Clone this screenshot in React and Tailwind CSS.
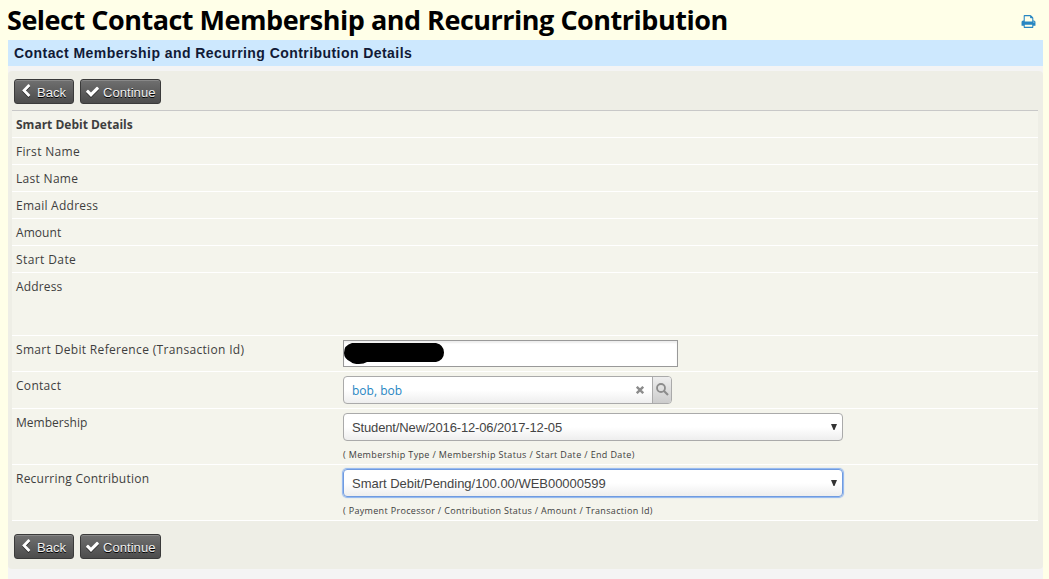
const CHEVRON =
  'M1427 301l-531 531 531 531q19 19 19 45t-19 45l-166 166q-19 19-45 19t-45-19l-742-742q-19-19-19-45t19-45l742-742q19-19 45-19t45 19l166 166q19 19 19 45t-19 45z';
const CHECK =
  'M1671 566q0 40-28 68l-724 724-136 136q-28 28-68 28t-68-28l-136-136-362-362q-28-28-28-68t28-68l136-136q28-28 68-28t68 28l294 295 656-657q28-28 68-28t68 28l136 136q28 28 28 68z';
const PRINT =
  'M448 1536h896v-256h-896v256zm0-640h896v-384h-160q-40 0-68-28t-28-68v-160h-640v640zm1152 64q0-26-19-45t-45-19-45 19-19 45 19 45 45 19 45-19 19-45zm128 0v416q0 13-9.5 22.5t-22.5 9.5h-224v160q0 40-28 68t-68 28h-960q-40 0-68-28t-28-68v-160h-224q-13 0-22.5-9.5t-9.5-22.5v-416q0-79 56.5-135.5t135.5-56.5h64v-544q0-40 28-68t68-28h672q40 0 88 20t76 48l152 152q28 28 48 76t20 88v256h64q79 0 135.5 56.5t56.5 135.5z';

function Icon({ path, className }) {
  return (
    <svg viewBox="0 0 1792 1792" fill="currentColor" className={className}>
      <path d={path} />
    </svg>
  );
}

function Button({ path, label, className, iconClass, textClass }) {
  return (
    <button
      className={`flex h-[25px] items-start rounded-[3px] border border-[#3a3a3a] bg-linear-to-b from-[#707070] to-[#4c4c4c] text-[13px] leading-[25px] text-[#f0f0f0] shadow-[inset_0_1px_0_#888] [text-shadow:0_1px_0_#000] ${className}`}
    >
      <Icon path={path} className={`drop-shadow-[0_1px_0_#222] text-white ${iconClass}`} />
      <span className={`whitespace-nowrap ${textClass}`}>{label}</span>
    </button>
  );
}

function Buttons() {
  return (
    <div className="flex gap-[6px] pl-[2px] font-['Liberation_Sans',Arial,sans-serif]">
      <Button path={CHEVRON} label="Back" className="w-[60px] pl-[4px]" iconClass="mt-[4px] size-[14px]" textClass="ml-[4px]" />
      <Button path={CHECK} label="Continue" className="w-[81px] pl-[4px]" iconClass="mt-[4px] size-[15px]" textClass="ml-[3px] tracking-[0.05px]" />
    </div>
  );
}

function Row({ label, height, labelClass, children }) {
  return (
    <div className={`flex border-b border-white pl-[4px] pt-[4px] ${height}`}>
      <div className={`w-[327px] shrink-0 whitespace-nowrap pt-px text-[12px] leading-[18px] ${labelClass}`}>{label}</div>
      {children}
    </div>
  );
}

function Select({ value, focused, textClass }) {
  return (
    <div
      className={`flex h-[28px] w-[500px] items-center rounded-[4px] border bg-linear-to-b from-white from-50% to-[#eeeeee] pl-[8px] pr-[5px] font-['Liberation_Sans',Arial,sans-serif] text-[13px] text-[#444] ${
        focused ? 'border-[#6f9be0] shadow-[0_0_1px_1px_#8db4f0]' : 'border-[#aaa]'
      }`}
    >
      <span className={`flex-1 whitespace-nowrap pt-px ${textClass}`}>{value}</span>
      <svg viewBox="0 0 6 6" className="size-[6px] fill-[#333]">
        <path d="M0 0h6L3.5 6h-1z" />
      </svg>
    </div>
  );
}

const NAMES = [
  ['First Name', 'tracking-[0.32px]'],
  ['Last Name', 'tracking-[0.3px]'],
  ['Email Address', 'tracking-[0.25px]'],
  ['Amount', 'tracking-[0.05px]'],
  ['Start Date', 'tracking-[0.4px]'],
];

export default function App() {
  return (
    <div className="h-[579px] w-[1049px] overflow-hidden bg-[#ffffe8] pl-[8px] font-['Open_Sans','Noto_Sans',sans-serif] text-[#3e3e3e]">
      <header className="flex h-[40px] justify-between pr-[13px]">
        <h1 className="-ml-px whitespace-nowrap text-[27px] font-bold leading-[40px] tracking-[-0.49px] text-black">
          Select Contact Membership and Recurring Contribution
        </h1>
        <Icon path={PRINT} className="mt-[14px] size-[15px] text-[#2786c2]" />
      </header>
      <main className="h-[539px] w-[1035px] bg-[#f4f4f4]">
        <h2 className="h-[26px] whitespace-nowrap bg-[#cde8fe] pl-[6px] font-['Liberation_Sans',Arial,sans-serif] text-[14px] font-bold leading-[26px] tracking-[0.44px] text-[#111a36]">
          Contact Membership and Recurring Contribution Details
        </h2>
        <div className="mt-[5px] h-[498px] rounded-[4px] bg-[#eeeee6] pl-[4px] pr-[5px] pt-[8px]">
          <Buttons />
          <div className="mb-[13px] mt-[6px] border-t border-[#c8c8c8] bg-[#f4f4ec]">
            <Row label="Smart Debit Details" height="h-[27px]" labelClass="font-bold" />
            {NAMES.map(([label, tracking]) => (
              <Row key={label} label={label} height="h-[27px]" labelClass={tracking} />
            ))}
            <Row label="Address" height="h-[63px]" labelClass="tracking-[0.15px]" />
            <Row label="Smart Debit Reference (Transaction Id)" height="h-[36px]" labelClass="tracking-[0.33px]">
              <div className="h-[27px] w-[335px] border border-[#999] bg-white shadow-[inset_0_2px_2px_#eeeeee]">
                <svg viewBox="0 0 101 24" className="block h-[24px] w-[101px]">
                  <path d="M8 2h84q8 2 8 9.500t-8 9.500H23q-3 2-8 2-6 0-8-2Q0 18 0 12 0 4 8 2z" fill="#000" />
                </svg>
              </div>
            </Row>
            <Row label="Contact" height="h-[37px]" labelClass="tracking-[0.3px]">
              <div className="flex h-[28px] w-[329px] overflow-hidden rounded-[4px] border border-[#aaa] bg-linear-to-b from-white from-50% to-[#eeeeee]">
                <span className="flex-1 pl-[8px] text-[12px] leading-[27px] text-[#2786c2]">bob, bob</span>
                <svg viewBox="0 0 8 8" className="mr-[8px] mt-[9px] size-[8px]" stroke="#8c8c8c" strokeWidth="2.400">
                  <path d="M.8.8l6.400 6.400M7.200.8L.8 7.200" />
                </svg>
                <div className="w-[19px] border-l border-[#aaa] bg-linear-to-b from-[#eeeeee] to-[#cccccc] pl-[3px] pt-[6px]">
                  <svg viewBox="0 0 13 13" className="size-[13px]" fill="none" stroke="#8c8c8c">
                    <circle cx="5" cy="5" r="4" strokeWidth="1.800" />
                    <path d="M8 8l4 4" strokeWidth="2.200" />
                  </svg>
                </div>
              </div>
            </Row>
            <Row label="Membership" height="h-[56px]" labelClass="tracking-[0.03px]">
              <div>
                <Select value="Student/New/2016-12-06/2017-12-05" textClass="tracking-[-0.14px]" />
                <p className="mt-[7px] whitespace-nowrap text-[9px] leading-[14px] tracking-[0.36px]">( Membership Type / Membership Status / Start Date / End Date)</p>
              </div>
            </Row>
            <Row label="Recurring Contribution" height="h-[56px]" labelClass="tracking-[0.24px]">
              <div>
                <Select focused value="Smart Debit/Pending/100.00/WEB00000599" textClass="tracking-[-0.02px]" />
                <p className="mt-[7px] whitespace-nowrap text-[9px] leading-[14px] tracking-[0.33px]">( Payment Processor / Contribution Status / Amount / Transaction Id)</p>
              </div>
            </Row>
          </div>
          <Buttons />
        </div>
      </main>
    </div>
  );
}
